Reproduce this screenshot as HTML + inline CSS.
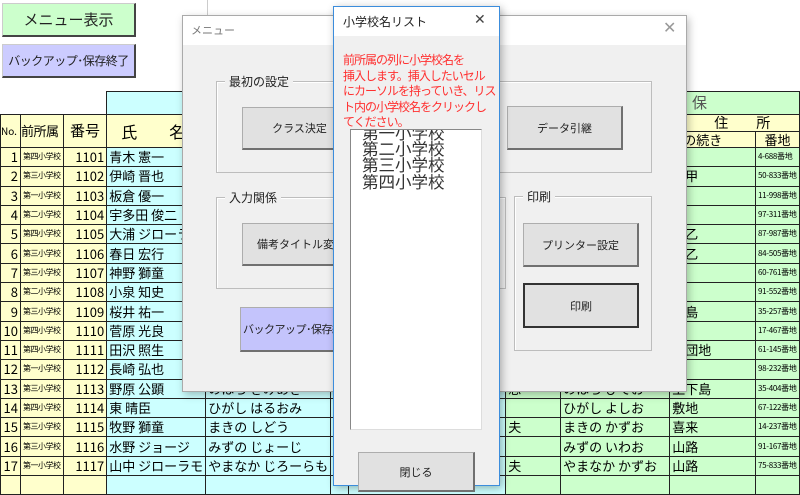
<!DOCTYPE html>
<html><head><meta charset="utf-8"><style>
*{margin:0;padding:0;box-sizing:border-box}
body{width:800px;height:480px;overflow:hidden;background:#fff;position:relative;font-family:"Liberation Sans","Noto Sans CJK JP",sans-serif;}
.a{position:absolute}
table{border-collapse:collapse;table-layout:fixed;position:absolute;left:0;top:91px;font-family:"Noto Sans CJK JP",sans-serif}
tr{height:19.3px}
td{border:1px solid #222;font-size:13px;line-height:14px;white-space:nowrap;overflow:hidden;padding:0 2px;}
.y{background:#ffffcc}.c{background:#ccffff}.g{background:#ccffcc}
.r{text-align:right}.s{font-size:8px;letter-spacing:-0.5px}.ad{font-size:8px;letter-spacing:-0.3px}
.btn{position:absolute;background:#e1e1e1;border:1px solid #adadad;border-right:2px solid #707070;border-bottom:2px solid #707070;font-size:12px;display:flex;align-items:center;justify-content:center;font-family:"Noto Sans CJK JP",sans-serif;color:#222;white-space:nowrap;overflow:hidden}
.grp{position:absolute;border:1px solid #bdbdbd;box-shadow:1px 1px 0 #fff inset}
.gl{position:absolute;top:-9px;left:8px;background:#f0f0f0;padding:0 4px;font-size:12px;font-family:"Noto Sans CJK JP",sans-serif;color:#222}
</style></head><body>
<div class="a" style="left:207px;top:0;width:1px;height:15px;background:#ccc"></div>
<div class="btn" style="left:2px;top:3px;width:134px;height:34px;background:#ccffcc;font-size:15px;border-color:#ccc #444 #444 #ccc">メニュー表示</div>
<div class="btn" style="left:2px;top:44px;width:134px;height:34px;background:#ccccff;font-size:12px;letter-spacing:-0.5px;border-color:#ccc #444 #444 #ccc">バックアップ･保存終了</div>

<table>
<colgroup><col style="width:20px"><col style="width:43px"><col style="width:44px"><col style="width:99px"><col style="width:110px"><col style="width:14px"><col style="width:170px"><col style="width:58px"><col style="width:110px"><col style="width:88px"><col style="width:44px"></colgroup>
<tr style="height:23px"><td colspan="3" style="border:none;background:#fff"></td><td colspan="4" class="c" style="border-bottom:none"></td><td colspan="4" class="g" style="text-align:right;padding-right:92px;font-size:15px;color:#555">保</td></tr>
<tr style="height:17px"><td rowspan="2" class="y" style="font-size:10px;padding:0">No.</td><td rowspan="2" class="y" style="font-size:13px;padding:0;letter-spacing:-0.5px">前所属</td><td rowspan="2" class="y" style="font-size:15px;text-align:center">番号</td><td rowspan="2" class="y" style="font-size:16px;padding-left:14px">氏　　名</td><td rowspan="2" class="y"></td><td rowspan="2" class="y"></td><td rowspan="2" class="y"></td><td rowspan="2" class="y"></td><td rowspan="2" class="y"></td><td colspan="2" class="y" style="font-size:14px;line-height:15px">現　　住　　所</td></tr>
<tr style="height:16px"><td class="y" style="font-size:13px;line-height:14px;padding:0">町の続き</td><td class="y" style="font-size:13px;line-height:14px;text-align:center;padding:0">番地</td></tr>
<tr><td class="y r">1</td><td class="y s">第四小学校</td><td class="y r">1101</td><td class="c">青木 憲一</td><td class="c"></td><td class="c"></td><td class="c"></td><td class="g"></td><td class="g"></td><td class="g">原</td><td class="g ad">4-688番地</td></tr>
<tr><td class="y r">2</td><td class="y s">第三小学校</td><td class="y r">1102</td><td class="c">伊崎 晋也</td><td class="c"></td><td class="c"></td><td class="c"></td><td class="g"></td><td class="g"></td><td class="g">来甲</td><td class="g ad">50-833番地</td></tr>
<tr><td class="y r">3</td><td class="y s">第一小学校</td><td class="y r">1103</td><td class="c">板倉 優一</td><td class="c"></td><td class="c"></td><td class="c"></td><td class="g"></td><td class="g"></td><td class="g">来</td><td class="g ad">11-998番地</td></tr>
<tr><td class="y r">4</td><td class="y s">第二小学校</td><td class="y r">1104</td><td class="c">宇多田 俊二</td><td class="c"></td><td class="c"></td><td class="c"></td><td class="g"></td><td class="g"></td><td class="g">島</td><td class="g ad">97-311番地</td></tr>
<tr><td class="y r">5</td><td class="y s">第四小学校</td><td class="y r">1105</td><td class="c">大浦 ジローラ</td><td class="c"></td><td class="c"></td><td class="c"></td><td class="g"></td><td class="g"></td><td class="g">来乙</td><td class="g ad">87-987番地</td></tr>
<tr><td class="y r">6</td><td class="y s">第三小学校</td><td class="y r">1106</td><td class="c">春日 宏行</td><td class="c"></td><td class="c"></td><td class="c"></td><td class="g"></td><td class="g"></td><td class="g">来乙</td><td class="g ad">84-505番地</td></tr>
<tr><td class="y r">7</td><td class="y s">第三小学校</td><td class="y r">1107</td><td class="c">神野 獅童</td><td class="c"></td><td class="c"></td><td class="c"></td><td class="g"></td><td class="g"></td><td class="g">来</td><td class="g ad">60-761番地</td></tr>
<tr><td class="y r">8</td><td class="y s">第二小学校</td><td class="y r">1108</td><td class="c">小泉 知史</td><td class="c"></td><td class="c"></td><td class="c"></td><td class="g"></td><td class="g"></td><td class="g">来</td><td class="g ad">91-552番地</td></tr>
<tr><td class="y r">9</td><td class="y s">第三小学校</td><td class="y r">1109</td><td class="c">桜井 祐一</td><td class="c"></td><td class="c"></td><td class="c"></td><td class="g"></td><td class="g"></td><td class="g">下島</td><td class="g ad">35-257番地</td></tr>
<tr><td class="y r">10</td><td class="y s">第四小学校</td><td class="y r">1110</td><td class="c">菅原 光良</td><td class="c"></td><td class="c"></td><td class="c"></td><td class="g"></td><td class="g"></td><td class="g">尾</td><td class="g ad">17-467番地</td></tr>
<tr><td class="y r">11</td><td class="y s">第四小学校</td><td class="y r">1111</td><td class="c">田沢 照生</td><td class="c"></td><td class="c"></td><td class="c"></td><td class="g"></td><td class="g"></td><td class="g">都団地</td><td class="g ad">61-145番地</td></tr>
<tr><td class="y r">12</td><td class="y s">第一小学校</td><td class="y r">1112</td><td class="c">長崎 弘也</td><td class="c"></td><td class="c"></td><td class="c"></td><td class="g"></td><td class="g"></td><td class="g">地</td><td class="g ad">98-232番地</td></tr>
<tr><td class="y r">13</td><td class="y s">第三小学校</td><td class="y r">1113</td><td class="c">野原 公顕</td><td class="c">のはら きみあき</td><td class="c">男</td><td class="c"></td><td class="g">思</td><td class="g">のはら ひでお</td><td class="g">上下島</td><td class="g ad">35-404番地</td></tr>
<tr><td class="y r">14</td><td class="y s">第四小学校</td><td class="y r">1114</td><td class="c">東 晴臣</td><td class="c">ひがし はるおみ</td><td class="c">男</td><td class="c"></td><td class="g"></td><td class="g">ひがし よしお</td><td class="g">敷地</td><td class="g ad">67-122番地</td></tr>
<tr><td class="y r">15</td><td class="y s">第三小学校</td><td class="y r">1115</td><td class="c">牧野 獅童</td><td class="c">まきの しどう</td><td class="c">男</td><td class="c"></td><td class="g">夫</td><td class="g">まきの かずお</td><td class="g">喜来</td><td class="g ad">14-237番地</td></tr>
<tr><td class="y r">16</td><td class="y s">第三小学校</td><td class="y r">1116</td><td class="c">水野 ジョージ</td><td class="c">みずの じょーじ</td><td class="c">男</td><td class="c"></td><td class="g"></td><td class="g">みずの いわお</td><td class="g">山路</td><td class="g ad">91-167番地</td></tr>
<tr><td class="y r">17</td><td class="y s">第一小学校</td><td class="y r">1117</td><td class="c">山中 ジローラモ</td><td class="c">やまなか じろーらも</td><td class="c">男</td><td class="c"></td><td class="g">夫</td><td class="g">やまなか かずお</td><td class="g">山路</td><td class="g ad">75-833番地</td></tr>
<tr><td class="y"></td><td class="y"></td><td class="y"></td><td class="c"></td><td class="c"></td><td class="c"></td><td class="c"></td><td class="g"></td><td class="g"></td><td class="g"></td><td class="g"></td></tr>
</table>

<!-- Menu dialog -->
<div class="a" style="left:182px;top:15px;width:505px;height:377px;background:#f0f0f0;border:1px solid #aaa;box-shadow:2px 3px 8px rgba(0,0,0,.25)">
 <div class="a" style="left:0;top:0;width:503px;height:29px;background:#fff"></div>
 <div class="a" style="left:8px;top:6px;font-size:11px;color:#777;font-family:'Noto Sans CJK JP',sans-serif">メニュー</div>
 <div class="a" style="left:480px;top:2px;font-size:16px;color:#999">✕</div>
 <div class="grp" style="left:33px;top:65px;width:436px;height:92px"><span class="gl">最初の設定</span></div>
 <div class="btn" style="left:59px;top:91px;width:116px;height:43px;font-size:11px">クラス決定</div>
 <div class="btn" style="left:324px;top:90px;width:116px;height:44px;font-size:11px">データ引継</div>
 <div class="grp" style="left:33px;top:181px;width:290px;height:92px"><span class="gl">入力関係</span></div>
 <div class="btn" style="left:59px;top:207px;width:116px;height:43px;font-size:11px;justify-content:flex-start;padding-left:14px">備考タイトル変更</div>
 <div class="grp" style="left:331px;top:180px;width:138px;height:155px"><span class="gl">印刷</span></div>
 <div class="btn" style="left:340px;top:207px;width:116px;height:44px;font-size:11px">プリンター設定</div>
 <div class="btn" style="left:340px;top:267px;width:116px;height:45px;border:2px solid #333;background:#e1e1e1;font-size:11px">印刷</div>
 <div class="btn" style="left:57px;top:291px;width:120px;height:45px;background:#c4c4fc;font-size:11px;letter-spacing:-0.5px;justify-content:flex-start;padding-left:2px">バックアップ･保存終了</div>
</div>

<!-- School list dialog -->
<div class="a" style="left:333px;top:6px;width:167px;height:480px;background:#f0f0f0;border:1px solid #3c8ddc;box-shadow:2px 2px 8px rgba(0,0,0,.3)">
 <div class="a" style="left:0;top:0;width:165px;height:29px;background:#fff"></div>
 <div class="a" style="left:9px;top:6px;font-size:12px;color:#222;font-family:'Noto Sans CJK JP',sans-serif">小学校名リスト</div>
 <div class="a" style="left:140px;top:4px;font-size:14px;color:#444">✕</div>
 <div class="a" style="left:9px;top:45px;width:156px;font-size:12px;line-height:15.6px;color:#ff3030;font-family:'Noto Sans CJK JP',sans-serif;letter-spacing:-1px;white-space:nowrap">前所属の列に小学校名を<br>挿入します。挿入したいセル<br>にカーソルを持っていき、リス<br>ト内の小学校名をクリックし<br>てください。</div>
 <div class="a" style="left:16px;top:122px;width:132px;height:301px;background:#fff;border:1px solid #888;border-right-color:#ddd;border-bottom-color:#ddd;overflow:hidden">
  <div style="padding:0 0 0 11px;margin-top:-6px;font-size:16.5px;line-height:16.2px;color:#333;font-family:'Noto Sans CJK JP',sans-serif">第一小学校<br>第二小学校<br>第三小学校<br>第四小学校</div>
 </div>
 <div class="btn" style="left:24px;top:445px;width:117px;height:40px;font-size:11px">閉じる</div>
</div>
</body></html>
